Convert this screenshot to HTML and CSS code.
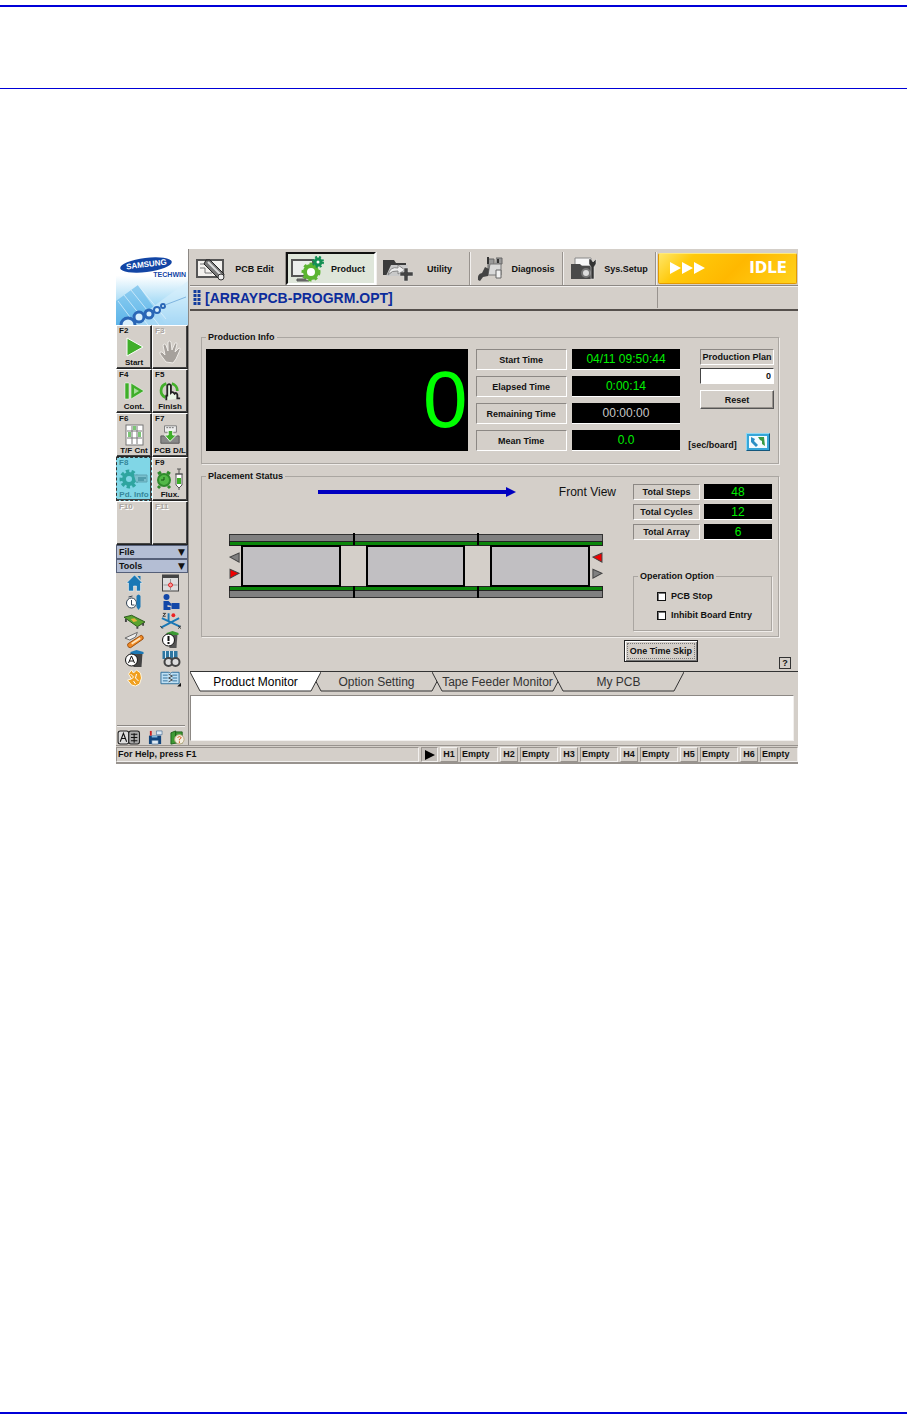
FILE: index.html
```html
<!DOCTYPE html>
<html lang="en">
<head>
    <meta charset="utf-8">
    <title>Product Monitor</title>
    <link rel="stylesheet" href="styles.css">
</head>
<body>
    <header class="page-head"></header>

    <main class="app">
        <!-- Left side: logo, function keys, tools -->
        <aside class="sidebar">
            <div class="logo">
                <svg viewBox="0 0 72 76" preserveAspectRatio="none" aria-hidden="true">
                    <defs>
                        <linearGradient id="sky" x1="0" y1="0" x2="0" y2="1">
                            <stop offset="0.35" stop-color="#ffffff"/>
                            <stop offset="0.7" stop-color="#a9dcf6"/>
                            <stop offset="1" stop-color="#5fb4ea"/>
                        </linearGradient>
                    </defs>
                    <rect width="72" height="76" fill="url(#sky)"/>
                    <path d="M0 52L22 36L50 76H0z" fill="#5bb4e8" opacity="0.6"/>
                    <path d="M12 76L72 32V76z" fill="#d5effc" opacity="0.6"/>
                    <path d="M8 46L32 76M15 41L43 76M2 52L20 76M22 36L50 70" stroke="#e4f5ff" stroke-width="1" opacity="0.7"/>
                    <g fill="#d8effc" stroke="#2a66b6">
                        <circle cx="12" cy="76" r="7" stroke-width="3"/>
                        <circle cx="23" cy="68" r="5" stroke-width="3"/>
                        <circle cx="33" cy="65" r="4" stroke-width="3"/>
                        <circle cx="41" cy="61" r="3" stroke-width="2"/>
                        <circle cx="47" cy="57" r="2" stroke-width="2"/>
                    </g>
                    <path d="M49 56L70 48" stroke="#7fb5e0" stroke-width="1"/>
                    <ellipse cx="30" cy="16" rx="26" ry="7" fill="#1245a5" transform="rotate(-7 30 16)"/>
                </svg>
                <span class="logo-name">SAMSUNG</span>
                <span class="logo-sub">TECHWIN</span>
            </div>

            <div class="fkeys">
                <button class="fkey"><span class="key">F2</span>
                    <svg viewBox="0 0 22 22"><path d="M4 2L20 11L4 20z" fill="#3fae2a" stroke="#fff"/></svg>
                    <span class="name">Start</span></button>
                <button class="fkey off"><span class="key">F3</span>
                    <svg class="tall" viewBox="0 0 24 24"><path d="M8 22L2 14Q1 11 4 12L7 15L5 5Q6 3 8 5L10 11L10 2Q12 0 13 2L14 10L17 3Q19 2 19 4L17 12L21 8Q23 8 22 10L18 19L15 23z" fill="#a6a19c" stroke="#efece8"/></svg>
                    <span class="name"></span></button>
                <button class="fkey"><span class="key">F4</span>
                    <svg viewBox="0 0 22 22"><path d="M2 3H6V19H2zM8 3L21 11L8 19z" fill="#3fae2a" stroke="#fff" stroke-width="0.5"/><path d="M11 8L16 11L11 14z" fill="#a5dd98"/></svg>
                    <span class="name">Cont.</span></button>
                <button class="fkey"><span class="key">F5</span>
                    <svg viewBox="0 0 24 22"><path d="M8 3A8 8 0 0 0 7 18M14 3A8 8 0 0 1 20 11" fill="none" stroke="#43b02a" stroke-width="3"/><path d="M8 21V16H9V5Q11 2 13 5V13Q15 11 17 14Q19 12 20 15V19H23" fill="#e8f3e4" stroke="#222" stroke-width="2"/></svg>
                    <span class="name">Finish</span></button>
                <button class="fkey"><span class="key">F6</span>
                    <svg viewBox="0 0 22 22"><rect x="3" y="1" width="17" height="20" fill="#fff" stroke="#777"/><path d="M4 7H19M4 14H19M9 2V20M14 2V20" stroke="#777"/><path d="M10 2H13V6H10zM15 8H18V13H15zM5 8H8V13H5z" fill="#7cc576"/></svg>
                    <span class="name">T/F Cnt</span></button>
                <button class="fkey"><span class="key">F7</span>
                    <svg viewBox="0 0 24 22"><path d="M6 1H19V8H6z" fill="#eee" stroke="#777"/><path d="M8 3H17" stroke="#666" stroke-dasharray="2 1"/><path d="M2 12H7L12 17L17 12H22V20H2z" fill="#888" stroke="#555"/><path d="M10 6H15V11H19L12 18L6 11H10z" fill="#3fae2a" stroke="#fff"/></svg>
                    <span class="name">PCB D/L</span></button>
                <button class="fkey on"><span class="key">F8</span>
                    <svg class="wide" viewBox="0 0 30 22"><circle cx="10" cy="11" r="7" fill="none" stroke="#2fa5a0" stroke-width="5" stroke-dasharray="3 2"/><circle cx="10" cy="11" r="5" fill="none" stroke="#2fa5a0" stroke-width="4"/><path d="M15 7H28V14H17" fill="#79bfcc" stroke="#5fa5b4"/><path d="M19 10H27M19 12H25" stroke="#2d7c8c"/></svg>
                    <span class="name">Pd. Info</span></button>
                <button class="fkey"><span class="key">F9</span>
                    <svg class="wide" viewBox="0 0 30 22"><circle cx="9" cy="12" r="6" fill="#52b848" stroke="#2f8a2c" stroke-width="2"/><path d="M3 6L6 4M15 6L12 4M5 18L3 20M13 18L15 20" stroke="#2f8a2c" stroke-width="3"/><path d="M9 9V12H6" stroke="#145214" fill="none"/><path d="M21 6H27V17L24 20L21 17z" fill="#fff" stroke="#555"/><path d="M22 10H26V16H22z" fill="#3fae2a"/><path d="M24 6V1M22 1H26M24 19V22M20 6H28" stroke="#555"/></svg>
                    <span class="name">Flux.</span></button>
                <button class="fkey off"><span class="key">F10</span></button>
                <button class="fkey off"><span class="key">F11</span></button>
            </div>

            <button class="menu-bar">File <span>▼</span></button>
            <button class="menu-bar">Tools <span>▼</span></button>

            <div class="tools">
                <button aria-label="Home"><svg viewBox="0 0 20 18"><path d="M10 1L18 9H16V17H12V12H9V17H4V9H2z" fill="#1b78b5" stroke="#fff" stroke-width="0.5"/><path d="M13 2H16V6z" fill="#1b78b5"/></svg></button>
                <button aria-label="Camera"><svg viewBox="0 0 20 18"><rect x="2" y="1" width="16" height="16" fill="#ddd" stroke="#444"/><path d="M2 1H18V4H2z" fill="#444"/><path d="M10 5V17M3 11H17" stroke="#999"/><circle cx="10" cy="11" r="2" fill="#f99" stroke="#d22"/></svg></button>
                <button aria-label="Nozzle"><svg viewBox="0 0 20 18"><circle cx="7" cy="10" r="5" fill="#fff" stroke="#345"/><path d="M7 7V12H10M4 4L8 3" stroke="#345" fill="none"/><path d="M12 3Q14 0 16 3V14L14 17L12 14z" fill="#1b78b5"/></svg></button>
                <button aria-label="Operator"><svg viewBox="0 0 20 18"><circle cx="6" cy="4" r="3" fill="#1247a8"/><path d="M3 8H8L11 11V13L7 12V14H10V17H3z" fill="#1247a8"/><path d="M11 10H19V16H11z" fill="#1247a8"/></svg></button>
                <button aria-label="Board"><svg viewBox="0 0 22 18"><path d="M0 5L8 3L22 10L14 15z" fill="#5aa32e" stroke="#28571a"/><path d="M7 7L11 6L14 9L10 10z" fill="#e3b23a"/><path d="M2 7V10M14 15V17M20 11V14" stroke="#444" stroke-width="2"/></svg></button>
                <button aria-label="Axis"><svg viewBox="0 0 22 18"><path d="M9 1V10M1 16L20 6M2 6L21 15" stroke="#1b78b5" stroke-width="2"/><circle cx="14" cy="3" r="2" fill="#e22"/><path d="M3 1H6L3 4H6M0 14L3 17M19 14L22 17M22 14L19 17" stroke="#333" fill="none"/></svg></button>
                <button aria-label="Feeder"><svg viewBox="0 0 22 18"><path d="M1 7L14 1L12 6L6 9z" fill="#eee" stroke="#666"/><path d="M4 13L18 4Q21 5 20 8L7 17Q3 17 4 13z" fill="#f08a24" stroke="#9b4d0c"/><path d="M8 13L17 7" stroke="#ffe2b8" stroke-width="2"/></svg></button>
                <button aria-label="Warning"><svg viewBox="0 0 20 18"><path d="M7 2H17L16 17H9z" fill="#555"/><path d="M6 2L12 0L18 2V4H6z" fill="#3b9a34"/><circle cx="8" cy="9" r="6" fill="#fff" stroke="#111"/><path d="M8 5V10M8 11V13" stroke="#111" stroke-width="2"/></svg></button>
                <button aria-label="Auto dump"><svg viewBox="0 0 20 18"><path d="M7 3H18L17 17H9z" fill="#444"/><path d="M6 2L12 0L19 2V4H6z" fill="#1b78b5"/><circle cx="7" cy="10" r="6" fill="#fff" stroke="#111"/><path d="M4 13L7 6L10 13M5 11H9" stroke="#111" fill="none"/></svg></button>
                <button aria-label="Reels"><svg viewBox="0 0 20 18"><path d="M2 1H17V9H2z" fill="#2e77a2"/><path d="M5 1V8M9 1V8M13 1V8" stroke="#d7ecf7"/><circle cx="8" cy="12" r="4" fill="#ddd" stroke="#444" stroke-width="2"/><circle cx="15" cy="12" r="4" fill="#ddd" stroke="#444" stroke-width="2"/></svg></button>
                <button aria-label="Maintenance"><svg viewBox="0 0 20 18"><path d="M4 5L7 1L9 4L12 1L16 4L17 9L15 15L11 17L7 16L3 11L7 10z" fill="#f0a020" stroke="#fff6dd"/><path d="M6 5L9 8L7 10M12 5L11 9L14 12M9 12L11 15" stroke="#fff" stroke-width="1" fill="none"/></svg></button>
                <button aria-label="Library"><svg viewBox="0 0 22 18"><path d="M1 3H9Q10 3 11 4Q12 3 13 3H20V15H1z" fill="#bfe0f4" stroke="#2e6e9a"/><path d="M3 6H8M3 9H8M3 12H8M13 6H18M13 9H18M13 12H18" stroke="#2e6e9a"/><path d="M9 5L13 7L9 9L13 11L9 13" stroke="#444" fill="none"/><path d="M22 14V18H18z" fill="#111"/></svg></button>
            </div>

            <div class="side-foot">
                <button aria-label="Language"><svg viewBox="0 0 22 14"><rect x="1" y="1" width="10" height="12" rx="2" fill="#ddd" stroke="#222"/><rect x="11" y="1" width="10" height="12" rx="2" fill="#aaa" stroke="#222"/><path d="M3 11L6 3L9 11M4 8H8" stroke="#111" fill="none"/><path d="M13 4H19M13 7H19M13 10H19M16 3V12" stroke="#111"/></svg></button>
                <button aria-label="Save"><svg viewBox="0 0 16 16"><path d="M1 6H14V15H1z" fill="#12457c"/><path d="M4 11H11V15H4zM9 1H15V5H9z" fill="#dfeaf3" stroke="#12457c" stroke-width="0.5"/><path d="M4 6H10V8H4z" fill="#7fb8dd"/><path d="M3 1V6" stroke="#c22" stroke-width="2"/></svg></button>
                <button aria-label="Help"><svg viewBox="0 0 16 16"><path d="M1 3L6 1V14L1 15zM6 2H13V14H6z" fill="#3e9a34" stroke="#1f641b"/><circle cx="10" cy="10" r="5" fill="#f4efe0" stroke="#b9a780"/><path d="M8 8Q10 6 12 8Q12 9 10 10V11M10 12V14" stroke="#d0541a" fill="none"/></svg></button>
            </div>
        </aside>

        <section class="workspace">
            <!-- Main mode toolbar -->
            <nav class="toolbar">
                <button class="mode">
                    <svg viewBox="0 0 34 26"><path d="M3 4H29V21H3z" fill="#f3f1ee" stroke="#555" stroke-width="2"/><path d="M6 8H14M6 12H11V17H18" stroke="#777" fill="none"/><path d="M12 4L16 4L30 18L29 23L24 22L10 8z" fill="#777" stroke="#222"/><path d="M14 6L27 19" stroke="#ddd" stroke-width="2"/><circle cx="27" cy="21" r="3" fill="#eee" stroke="#333"/></svg>
                    <span>PCB Edit</span></button>
                <button class="mode active">
                    <svg viewBox="0 0 34 26"><path d="M2 4H23V20H2z" fill="#eceeec" stroke="#555" stroke-width="2"/><path d="M10 20H16V23H7V25H19" fill="#777" stroke="#555"/><circle cx="21" cy="16" r="6" fill="#fff" stroke="#5cb531" stroke-width="4"/><circle cx="21" cy="16" r="8" fill="none" stroke="#5cb531" stroke-width="3" stroke-dasharray="3 3"/><circle cx="28" cy="6" r="3" fill="#fff" stroke="#139054" stroke-width="3"/><circle cx="28" cy="6" r="5" fill="none" stroke="#139054" stroke-width="2" stroke-dasharray="2 2"/></svg>
                    <span>Product</span></button>
                <button class="mode">
                    <svg viewBox="0 0 34 26"><path d="M3 4H14L16 7H26V19H3z" fill="#3b3b3b"/><path d="M6 20L11 9H28L25 20z" fill="#c9c9c9"/><path d="M8 19Q10 10 18 12V9L25 14L18 18V15Q12 14 8 19z" fill="#eee" stroke="#888"/><path d="M24 12H28V16H33V20H28V25H24V20H20V16H24z" fill="#444" stroke="#ddd" stroke-width="0.5"/></svg>
                    <span>Utility</span></button>
                <button class="mode">
                    <svg viewBox="0 0 34 26"><path d="M14 3H20V13H14zM22 2H28V8H25V13H20" fill="#999" stroke="#666"/><path d="M16 8H27V19H14z" fill="#d9d9d9" stroke="#777"/><path d="M22 14H27V22H22z" fill="#f1f1f1" stroke="#666"/><path d="M4 24Q3 18 8 17L11 11L15 13L14 20L9 21L6 25z" fill="#444"/><path d="M14 1V8M24 3V7" stroke="#333" stroke-width="2"/></svg>
                    <span>Diagnosis</span></button>
                <button class="mode">
                    <svg viewBox="0 0 34 26"><path d="M8 2H24V10H8z" fill="#f7f7f7" stroke="#888"/><path d="M4 8H13L15 10H25V23H4z" fill="#4a4a4a"/><circle cx="19" cy="17" r="4" fill="#ddd" stroke="#777" stroke-width="2"/><path d="M24 3L26 6L29 3V8L27 11V23H24V11L22 8V3z" fill="#333" stroke="#eee" stroke-width="0.5"/></svg>
                    <span>Sys.Setup</span></button>
                <div class="state">
                    <svg viewBox="0 0 36 14"><path d="M0 1L11 7L0 13zM12 1L23 7L12 13zM24 1L35 7L24 13z" fill="#fff"/></svg>
                    <span>IDLE</span>
                </div>
            </nav>

            <div class="title-bar">
                <svg viewBox="0 0 8 16"><path d="M2 0V16M6 0V16" stroke="#123c9c" stroke-width="3" stroke-dasharray="3 1"/></svg>
                <h1>[ARRAYPCB-PROGRM.OPT]</h1>
                <span class="title-side"></span>
            </div>

            <div class="content">
                <fieldset class="group production">
                    <legend>Production Info</legend>
                    <output class="counter">0</output>
                    <dl class="times">
                        <dt class="sunken">Start Time</dt><dd class="lcd">04/11 09:50:44</dd>
                        <dt class="sunken">Elapsed Time</dt><dd class="lcd">0:00:14</dd>
                        <dt class="sunken">Remaining Time</dt><dd class="lcd idle">00:00:00</dd>
                        <dt class="sunken">Mean Time</dt><dd class="lcd">0.0</dd>
                    </dl>
                    <div class="plan">
                        <label class="sunken" for="planCount">Production Plan</label>
                        <input type="text" id="planCount" value="0">
                        <button class="raised">Reset</button>
                        <div class="unit">
                            <span>[sec/board]</span>
                            <button class="refresh" aria-label="Change unit"><svg viewBox="0 0 18 12"><path d="M2 1V6L7 11L9 9L5 5L6 3z" fill="#2b8fc4"/><path d="M9 1H15L16 10L13 8V5L11 4z" fill="#3a9a45"/></svg></button>
                        </div>
                    </div>
                </fieldset>

                <fieldset class="group placement">
                    <legend>Placement Status</legend>
                    <div class="placement-body">
                        <div class="view">
                            <div class="direction">
                                <svg viewBox="0 0 198 10"><path d="M0 3H188V0L198 5L188 10V7H0z" fill="#0000c0"/></svg>
                                <span>Front View</span>
                            </div>
                            <!-- Conveyor with three work stations -->
                            <svg class="conveyor" viewBox="0 0 374 66" shape-rendering="crispEdges" role="img" aria-label="Conveyor">
                                <path d="M1 1H373V9H1zM1 56H373V64H1z" fill="#808080" stroke="#333"/>
                                <path d="M1 8H373V12H1zM1 53H373V57H1z" fill="#0a860a" stroke="#222"/>
                                <path d="M125 0V12M249 0V12M125 53V65M249 53V65" stroke="#000" stroke-width="2"/>
                                <g fill="#c1bfc2" stroke="#000" stroke-width="2">
                                    <rect x="14" y="13" width="97" height="40"/>
                                    <rect x="138" y="13" width="97" height="40"/>
                                    <rect x="262" y="13" width="97" height="40"/>
                                </g>
                                <g stroke="#444" shape-rendering="auto">
                                    <path d="M11 20V29L2 24z" fill="#808080"/>
                                    <path d="M2 36V45L11 40z" fill="#f00000"/>
                                    <path d="M372 20V29L363 24z" fill="#f00000"/>
                                    <path d="M363 36V45L372 40z" fill="#808080"/>
                                </g>
                            </svg>
                        </div>
                        <div class="totals">
                            <dl class="sums">
                                <dt class="sunken">Total Steps</dt><dd class="lcd">48</dd>
                                <dt class="sunken">Total Cycles</dt><dd class="lcd">12</dd>
                                <dt class="sunken">Total Array</dt><dd class="lcd">6</dd>
                            </dl>
                            <fieldset class="group options">
                                <legend>Operation Option</legend>
                                <label><input type="checkbox"> PCB Stop</label>
                                <label><input type="checkbox"> Inhibit Board Entry</label>
                            </fieldset>
                        </div>
                    </div>
                </fieldset>

                <div class="actions">
                    <button class="skip"><span>One Time Skip</span></button>
                    <button class="help">?</button>
                </div>
            </div>

            <div class="tabs" role="tablist">
                <button class="tab active" role="tab"><svg viewBox="0 0 131 20"><path d="M0 0L10 19H121L131 0"/></svg><span>Product Monitor</span></button>
                <button class="tab" role="tab"><svg viewBox="0 0 131 20"><path d="M0 0L10 19H121L131 0"/></svg><span>Option Setting</span></button>
                <button class="tab" role="tab"><svg viewBox="0 0 131 20"><path d="M0 0L10 19H121L131 0"/></svg><span>Tape Feeder Monitor</span></button>
                <button class="tab" role="tab"><svg viewBox="0 0 131 20"><path d="M0 0L10 19H121L131 0"/></svg><span>My PCB</span></button>
            </div>
            <div class="log"></div>
        </section>

        <footer class="status">
            <span class="cell message">For Help, press F1</span>
            <span class="cell play"><svg viewBox="0 0 10 10"><path d="M0 0L10 5L0 10z"/></svg></span>
            <span class="head">H1</span><span class="cell slot">Empty</span>
            <span class="head">H2</span><span class="cell slot">Empty</span>
            <span class="head">H3</span><span class="cell slot">Empty</span>
            <span class="head">H4</span><span class="cell slot">Empty</span>
            <span class="head">H5</span><span class="cell slot">Empty</span>
            <span class="head">H6</span><span class="cell slot">Empty</span>
        </footer>
    </main>

    <footer class="page-foot"></footer>
</body>
</html>
```
FILE: styles.css
```css
* {
    box-sizing: border-box;
}

body {
    margin: 0;
    min-height: 100vh;
    display: flex;
    flex-direction: column;
    background: #fff;
    color: #111;
    font-family: "Liberation Sans", Arial, sans-serif;
    font-size: 9px;
    font-weight: bold;
    line-height: 12px;
}

button, input {
    font: inherit;
    color: inherit;
    margin: 0;
    padding: 0;
    border: 0;
    background: none;
}

svg {
    display: block;
}

dl, dd, h1 {
    margin: 0;
}

/* Page rules above and below the window */
.page-head {
    margin-top: 5px;
    height: 84px;
    border-top: 2px solid #0000d8;
    border-bottom: 1px solid #0000d8;
}

.page-foot {
    margin-top: auto;
    height: 12px;
    border-top: 2px solid #0000d8;
}

.app {
    margin: 160px 109px 0 116px;
    display: grid;
    grid-template-columns: 73px 1fr;
    background: #d4cfc9;
}

/* Sidebar */
.sidebar {
    display: flex;
    flex-direction: column;
    border-right: 1px solid #8c8884;
}

.logo {
    position: relative;
    height: 76px;
}

.logo svg {
    width: 100%;
    height: 100%;
}

.logo-name {
    position: absolute;
    left: 10px;
    top: 10px;
    color: #fff;
    font-size: 8px;
    transform: rotate(-7deg);
}

.logo-sub {
    position: absolute;
    right: 2px;
    top: 20px;
    color: #1245a5;
    font-size: 7px;
}

.fkeys {
    display: grid;
    grid-template-columns: 1fr 1fr;
    grid-auto-rows: 44px;
}

.fkey {
    display: flex;
    flex-direction: column;
    align-items: center;
    justify-content: space-between;
    border: 1px solid;
    border-color: #fff #222 #222 #fff;
    box-shadow: inset -1px -1px #444;
    background: #d4cfc9;
    font-size: 8px;
    line-height: 10px;
}

.fkey .key {
    align-self: flex-start;
    padding-left: 2px;
}

.fkey svg {
    width: 22px;
    height: 22px;
}

.fkey svg.wide {
    width: 30px;
}

.fkey svg.tall {
    width: 24px;
    height: 24px;
}

.fkey .name {
    white-space: nowrap;
}

.fkey.off .key {
    color: #aaa5a0;
    text-shadow: 1px 1px #fff;
}

.fkey.on {
    background: #80d6e6;
    color: #36879a;
    border: 1px dashed #333;
}

.menu-bar {
    display: flex;
    justify-content: space-between;
    padding: 0 2px;
    border: 1px solid #555f78;
    background: #b4bed4;
}

.menu-bar span {
    font-family: "DejaVu Sans", sans-serif;
}

.tools {
    display: grid;
    grid-template-columns: 1fr 1fr;
    grid-auto-rows: 19px;
}

.tools button {
    display: grid;
    place-items: center;
}

.tools svg {
    width: 21px;
    height: 18px;
}

.side-foot {
    display: flex;
    justify-content: space-between;
    align-items: flex-end;
    margin: auto 3px 0 1px;
    height: 20px;
    border-top: 1px solid #8c8884;
    box-shadow: inset 0 1px #f2f0ee;
}

.side-foot svg {
    height: 15px;
}

/* Toolbar */
.workspace {
    display: flex;
    flex-direction: column;
    min-width: 0;
    padding-left: 1px;
}

.toolbar {
    display: grid;
    grid-template-columns: 96fr 90fr 94fr 93fr 93fr 142fr;
    height: 37px;
    padding-top: 3px;
    border-bottom: 1px solid #8c8884;
}

.mode {
    display: flex;
    align-items: center;
    padding: 0 4px 0 4px;
    border-right: 1px solid #98938e;
    box-shadow: 1px 0 #f2f0ee;
}

.mode svg {
    width: 34px;
    height: 26px;
}

.mode span {
    flex: 1;
}

.mode.active {
    border: 2px solid;
    border-color: #111 #fff #fff #111;
    background: #dfe6da;
    padding: 0 2px;
}

.state {
    display: flex;
    align-items: center;
    justify-content: space-between;
    margin: 1px 1px 1px 2px;
    padding: 0 9px 2px 11px;
    border: 1px solid #e29a00;
    border-top-color: #ffe97a;
    border-radius: 2px;
    background: linear-gradient(135deg, #ffe668 0%, #ffc90a 22%, #ffb800 55%, #ffd21c 100%);
    color: #fff;
    font-family: "DejaVu Sans", sans-serif;
    font-size: 15px;
}

.state svg {
    width: 36px;
    height: 14px;
}

.title-bar {
    display: grid;
    grid-template-columns: 8px 451fr 142fr;
    column-gap: 4px;
    align-items: center;
    height: 25px;
    padding: 0 0 1px 3px;
    border-top: 1px solid #f2f0ee;
    border-bottom: 2px solid #55504c;
}

.title-bar svg {
    width: 8px;
    height: 16px;
}

h1 {
    color: #0c2c9c;
    font-size: 14px;
    line-height: 20px;
}

.title-side {
    align-self: stretch;
    border-left: 1px solid #98938e;
}

/* Monitor page */
.content {
    padding: 20px 19px 0 11px;
}

.group {
    min-width: 0;
    margin: 0;
    border: 1px solid #aaa6a1;
    box-shadow: 1px 1px #efece9;
}

.group legend {
    padding: 0 2px;
}

.sunken {
    display: grid;
    place-items: center;
    border: 1px solid;
    border-color: #8c8884 #fff #fff #8c8884;
    white-space: nowrap;
}

.lcd {
    display: grid;
    place-items: center;
    background: #000;
    color: #00f000;
    border-bottom: 1px solid #fff;
    font-size: 12px;
    font-weight: normal;
}

.lcd.idle {
    color: #c8c8c8;
}

.production {
    display: grid;
    grid-template-columns: 262fr 205fr 86fr;
    column-gap: 8px;
    padding: 6px 4px 12px 4px;
}

.counter {
    display: flex;
    align-items: center;
    justify-content: flex-end;
    background: #000;
    color: #00ff00;
    font-size: 80px;
    font-weight: normal;
    line-height: 80px;
}

.times {
    display: grid;
    grid-template-columns: 91fr 108fr;
    grid-auto-rows: 21px;
    gap: 6px 5px;
}

.plan {
    display: flex;
    flex-direction: column;
    align-items: flex-end;
}

.plan > .sunken {
    width: 74px;
    height: 16px;
}

.plan input {
    width: 74px;
    height: 16px;
    margin-top: 3px;
    padding-right: 2px;
    border: 1px solid;
    border-color: #444 #fff #fff #444;
    background: #fff;
    text-align: right;
}

.raised {
    width: 74px;
    height: 19px;
    margin-top: 6px;
    border: 1px solid;
    border-color: #fff #555 #555 #fff;
    box-shadow: inset -1px -1px #98938e;
}

.unit {
    display: flex;
    justify-content: space-between;
    align-items: flex-end;
    align-self: stretch;
    margin: auto 4px 0 0;
}

.refresh {
    padding: 2px;
    border: 1px solid;
    border-color: #8fd8f5 #14577c #14577c #8fd8f5;
    background: #37a6d8;
}

.refresh svg {
    width: 18px;
    height: 12px;
    background: #f4fbff;
}

.placement {
    margin-top: 6px;
    padding: 2px 6px 5px 4px;
}

.placement-body {
    display: grid;
    grid-template-columns: 1fr 139px;
    column-gap: 29px;
    padding-left: 22px;
}

.direction {
    display: flex;
    justify-content: flex-end;
    align-items: center;
    gap: 43px;
    padding-top: 2px;
    margin-right: -12px;
    font-size: 12px;
    font-weight: normal;
}

.direction svg {
    width: 198px;
    height: 10px;
}

.conveyor {
    width: 100%;
    margin-top: 35px;
}

.sums {
    display: grid;
    grid-template-columns: 67fr 68fr;
    grid-auto-rows: 16px;
    gap: 4px;
}

.options {
    margin-top: 30px;
    padding: 1px 0 2px 4px;
}

.options label {
    display: flex;
    align-items: center;
    gap: 5px;
    margin: 7px 0 7px 19px;
    white-space: nowrap;
}

.options input {
    appearance: none;
    width: 9px;
    height: 9px;
    border: 1px solid #111;
    box-shadow: inset 1px 1px #777;
    background: #fff;
}

.options input:checked {
    background: #111;
}

.actions {
    display: flex;
    justify-content: flex-end;
    align-items: flex-start;
    gap: 81px;
    margin: 3px -12px 0 0;
    height: 31px;
}

.skip {
    padding: 2px;
    border: 1px solid #222;
    box-shadow: inset 1px 1px #fff, inset -1px -1px #777;
    white-space: nowrap;
}

.skip span {
    display: block;
    padding: 1px 2px;
    border: 1px dotted #777;
}

.help {
    align-self: flex-end;
    width: 12px;
    height: 12px;
    margin-bottom: 2px;
    border: 1px solid #333;
    line-height: 10px;
}

/* Tabs */
.tabs {
    display: flex;
    height: 21px;
    border-top: 1px solid #333;
}

.tab {
    position: relative;
    width: 131px;
    height: 20px;
    margin-right: -10px;
    color: #333;
    font-size: 12px;
    font-weight: normal;
    white-space: nowrap;
}

.tab svg {
    position: absolute;
    left: 0;
    top: 0;
    width: 100%;
    height: 100%;
    fill: #d4cfc9;
    stroke: #333;
}

.tab span {
    position: relative;
}

.tab.active {
    z-index: 1;
    color: #000;
}

.tab.active svg {
    fill: #fff;
}

.log {
    height: 46px;
    margin: 3px 4px 4px 0;
    border: 1px solid;
    border-color: #8c8884 #f2f0ee #f2f0ee #8c8884;
    background: #fff;
}

/* Status bar */
.status {
    grid-column: 1 / -1;
    display: flex;
    align-items: stretch;
    gap: 2px;
    height: 19px;
    padding-top: 1px;
    border-top: 1px solid #98938e;
    border-bottom: 2px solid #98938e;
    line-height: 12px;
}

.cell {
    border: 1px solid;
    border-color: #98938e #f2f0ee #f2f0ee #98938e;
}

.message {
    flex: 1;
    padding-left: 1px;
}

.play {
    display: grid;
    place-items: center;
    width: 17px;
    background: #c4bfba;
}

.play svg {
    width: 10px;
    height: 10px;
}

.head {
    width: 18px;
    border: 1px solid;
    border-color: #f2f0ee #98938e #98938e #f2f0ee;
    text-align: center;
}

.slot {
    width: 38px;
    padding-left: 1px;
}
```
